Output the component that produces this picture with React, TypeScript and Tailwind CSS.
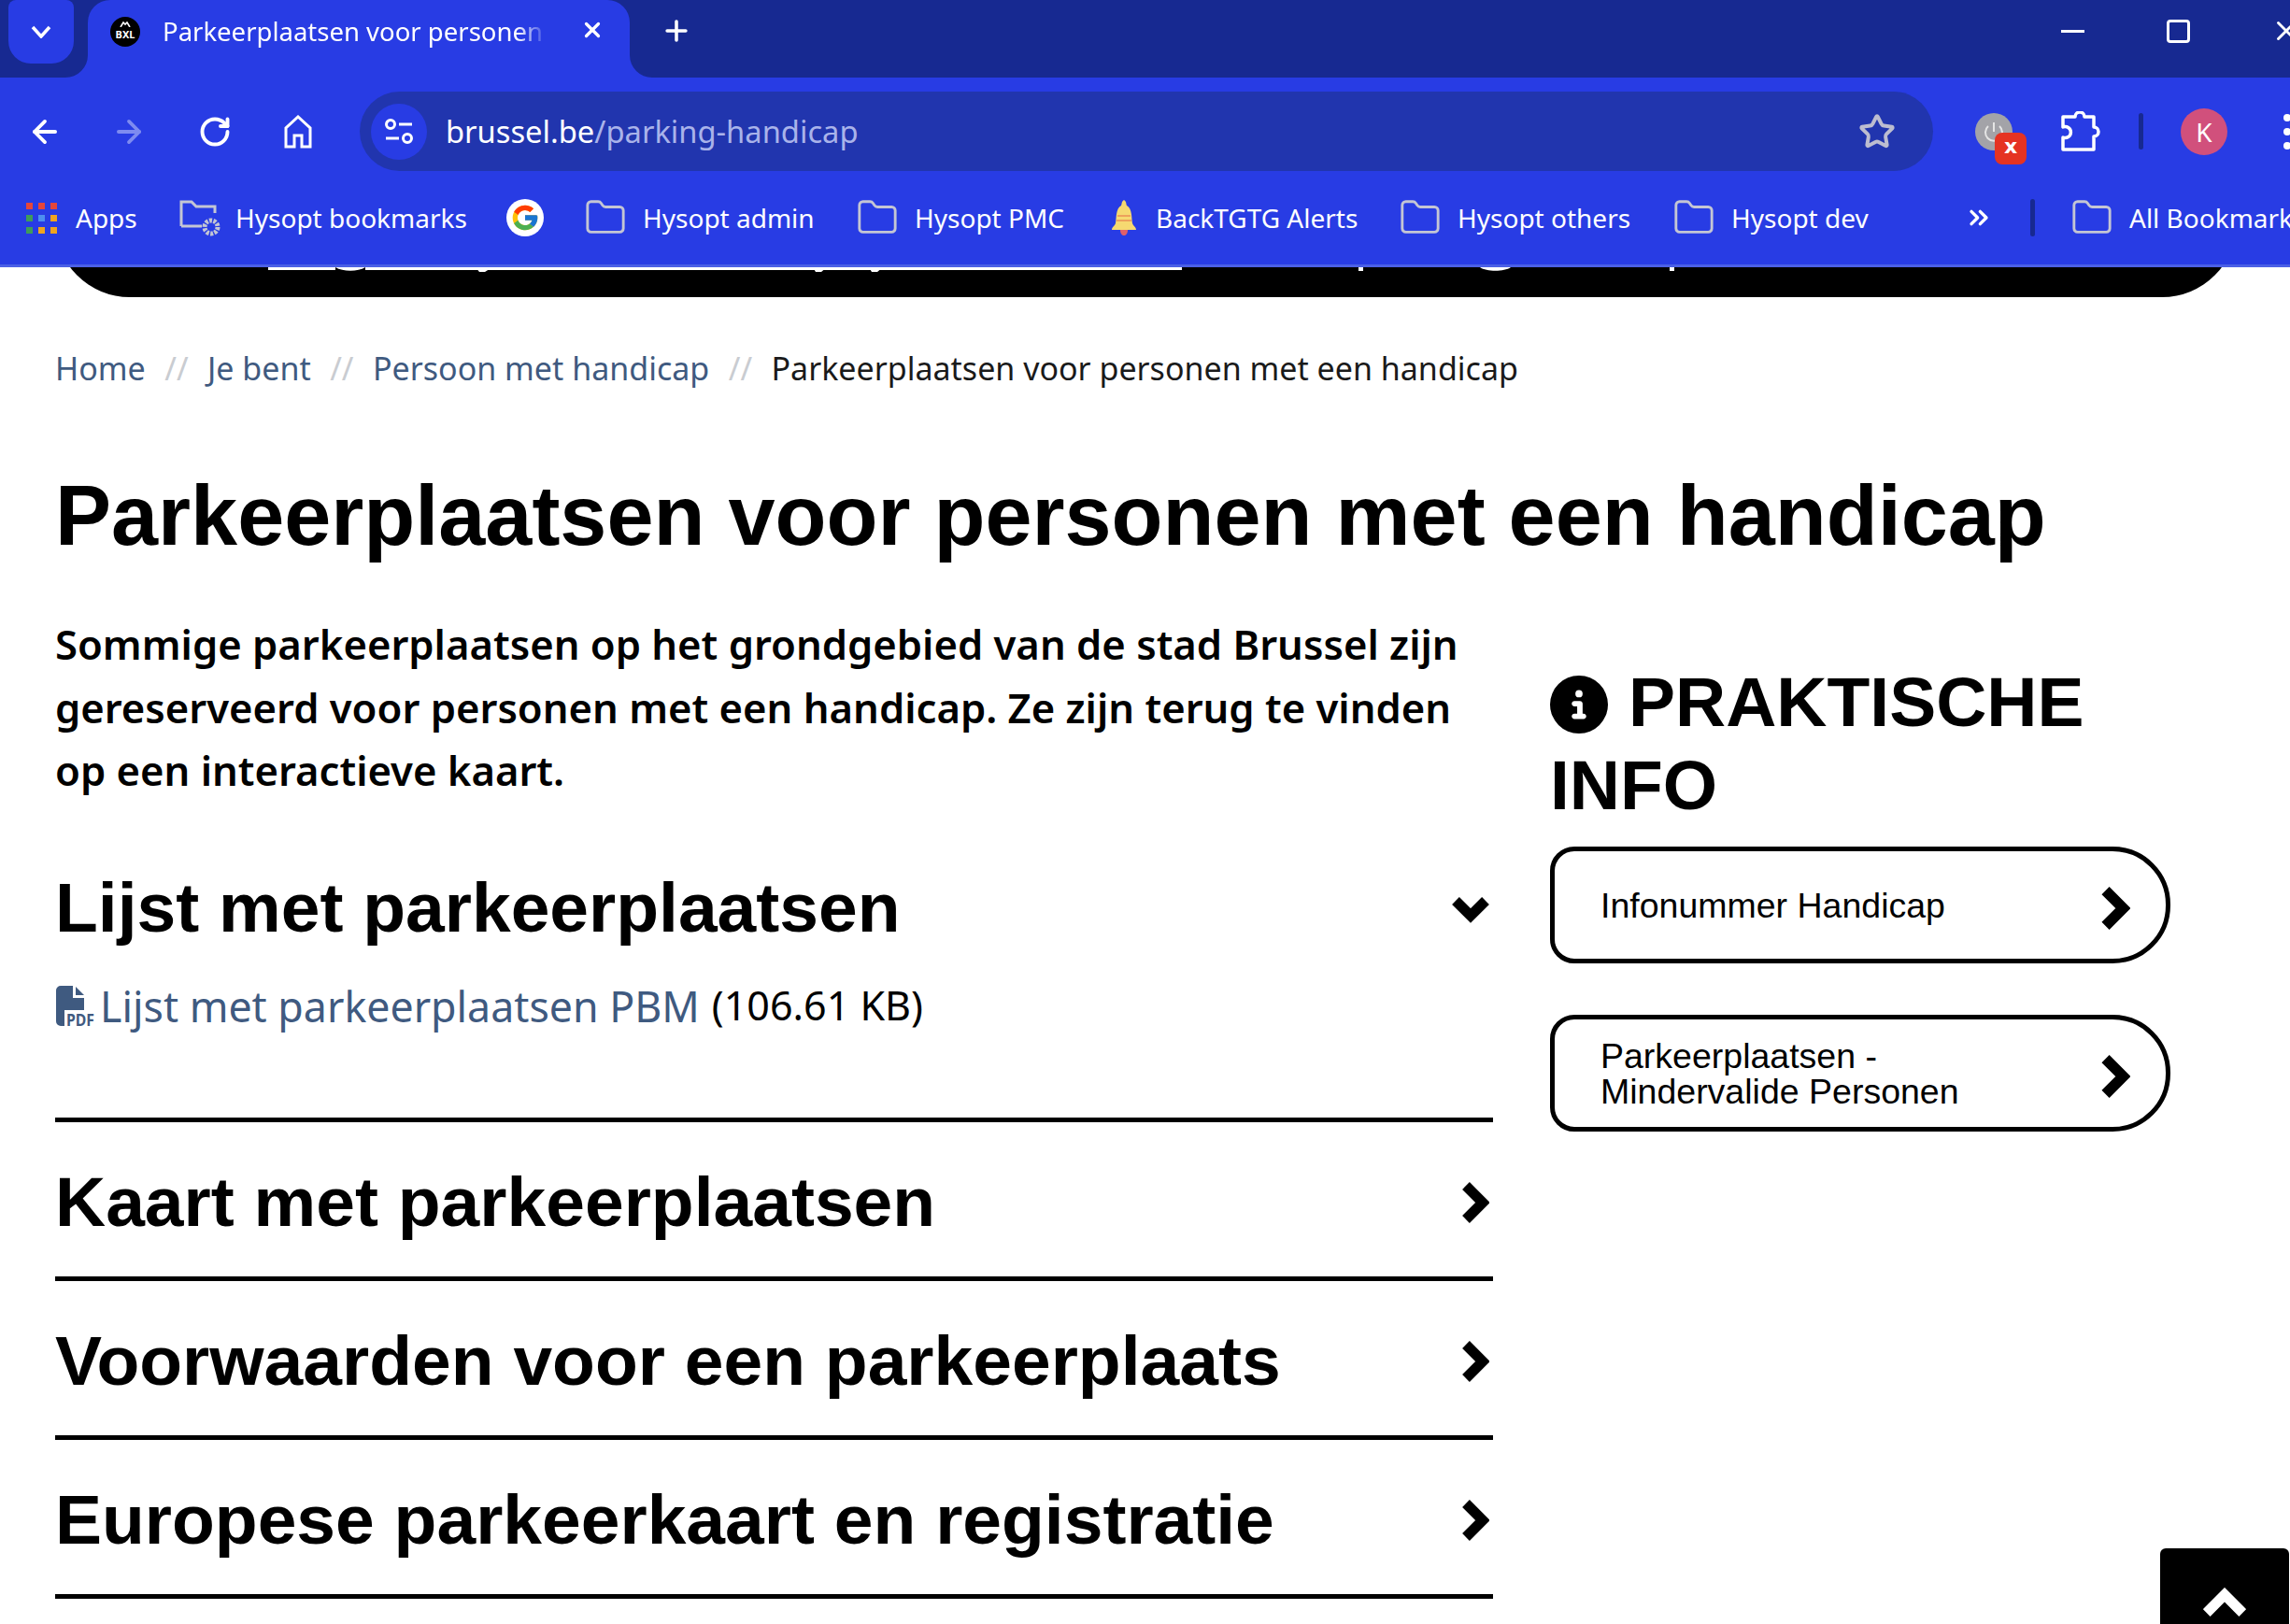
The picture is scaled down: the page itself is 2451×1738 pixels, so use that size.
import { ArrowLeft, ArrowRight, ChevronsRight, Folder, Plus, RotateCw, Star, X } from "lucide-react"
import { FaCircleInfo } from "react-icons/fa6"
import { FcGoogle } from "react-icons/fc"

const chrome = { fontFamily: '"Noto Sans", sans-serif' }
const body = { fontFamily: '"Noto Sans", sans-serif' }

function Flare({ flip }: { flip?: boolean }) {
  return (
    <svg width="24" height="24" viewBox="0 0 24 24" className={flip ? "absolute bottom-0 left-full" : "absolute bottom-0 right-full -scale-x-100"}>
      <path d="M0 0 V24 H24 A24 24 0 0 1 0 0 Z" fill="#283ce4" />
    </svg>
  )
}

function BookmarkFolder() {
  return <Folder size={46} strokeWidth={1.5} className="text-[#c4c6d4] shrink-0 -mx-[3px]" />
}

function Bookmark({ w, icon, label }: { w: string; icon: React.ReactNode; label: string }) {
  return (
    <div className={`flex items-center shrink-0 ${w}`}>
      {icon}
      <span className="ml-[20px] text-[28px] text-white whitespace-nowrap">{label}</span>
    </div>
  )
}

function AppsIcon() {
  const cols = ["bg-[#e5463a]", "bg-[#e5463a]", "bg-[#e5463a]", "bg-[#3f9c5a]", "bg-[#4d8ff0]", "bg-[#efa41f]", "bg-[#3f9c5a]", "bg-[#efa41f]", "bg-[#efa41f]"]
  return (
    <div className="grid grid-cols-[7px_7px_7px] gap-[6px] shrink-0">
      {cols.map((c, i) => (
        <div key={i} className={`h-[7px] ${c}`} />
      ))}
    </div>
  )
}

function Chev({ className, sw = 11 }: { className: string; sw?: number }) {
  return (
    <svg viewBox="0 0 30 44" className={className}>
      <path d="M5 4 L23 22 L5 40" fill="none" stroke="#000" strokeWidth={sw} />
    </svg>
  )
}

function AccordionRow({ title }: { title: string }) {
  return (
    <div className="h-[170px] border-b-[5px] border-black flex items-center justify-between pr-[4px] pt-[6px]">
      <h2 className="text-[75px] leading-[90px] font-bold">{title}</h2>
      <Chev className="w-[30px] h-[44px] mt-[2px]" />
    </div>
  )
}

function SideButton({ children }: { children: React.ReactNode }) {
  return (
    <div className="h-[125px] border-[5px] border-black rounded-l-[26px] rounded-r-[62px] flex items-center justify-between pl-[49px] pr-[38px] text-[37.5px] leading-[38px]">
      <div>{children}</div>
      <Chev className="w-[32px] h-[46px] mt-[6px]" />
    </div>
  )
}

export default function App() {
  return (
    <div className="relative h-[1738px] w-[2451px] overflow-hidden bg-white text-black" style={{ fontFamily: '"Liberation Sans", Arial, sans-serif' }}>
      {/* browser chrome */}
      <div className="relative z-10" style={chrome}>
        <div className="h-[83px] bg-[#172991] flex items-start">
          <div className="ml-[9px] w-[70px] h-[68px] bg-[#283ce4] rounded-b-[24px] rounded-t-[8px] flex items-center justify-center shrink-0">
            <svg width="22" height="14" viewBox="0 0 22 14"><path d="M2 2 L11 12 L20 2" fill="none" stroke="#fff" strokeWidth="3.5" /></svg>
          </div>
          <div className="relative ml-[15px] w-[580px] h-[83px] bg-[#283ce4] rounded-t-[24px] flex items-center pl-[24px] shrink-0 pb-[16px]">
            <Flare />
            <Flare flip />
            <div className="relative w-[32px] h-[32px] rounded-full bg-black text-white text-[11px] font-bold flex items-center justify-center pt-[7px] shrink-0">
              <svg width="12" height="6" viewBox="0 0 12 6" className="absolute top-[5px] left-[10px]"><path d="M1 6 L4 1 L6 3 L8 1 L11 6" fill="none" stroke="#fff" strokeWidth="1.6" /></svg>
              BXL
            </div>
            <span className="ml-[24px] w-[412px] overflow-hidden whitespace-nowrap text-[27.5px] text-white [mask-image:linear-gradient(to_right,black_92%,transparent)]">Parkeerplaatsen voor personen met een handicap</span>
            <X size={26} strokeWidth={3} className="text-white ml-[35px] shrink-0 -mt-[4px]" />
          </div>
          <Plus size={34} strokeWidth={2.5} className="text-white ml-[33px] mt-[16px] shrink-0" />
          <div className="ml-auto flex items-center shrink-0 h-[66px]">
            <div className="w-[25px] h-[3px] bg-white" />
            <div className="ml-[88px] w-[25px] h-[25px] border-[3px] border-white rounded-[4px]" />
            <X size={34} strokeWidth={2} className="text-white ml-[86px] -mr-[13px]" />
          </div>
        </div>
        <div className="h-[100px] pt-[15px] bg-[#283ce4] flex items-center">
          <ArrowLeft size={38} strokeWidth={2.4} className="text-white ml-[29px] shrink-0" />
          <ArrowRight size={38} strokeWidth={2.4} className="text-[#7e8bf0] ml-[52px] shrink-0" />
          <RotateCw size={36} strokeWidth={2.6} className="text-white ml-[55px] shrink-0" />
          <svg width="32" height="36" viewBox="0 0 32 36" className="ml-[55px] shrink-0">
            <path d="M3 34 V14 L16 2 L29 14 V34 H20 V22 H12 V34 Z" fill="none" stroke="#fff" strokeWidth="3" />
          </svg>
          <div className="ml-[50px] w-[1684px] h-[85px] rounded-full bg-[#2135ae] flex items-center pl-[12px] pr-[40px] shrink-0">
            <div className="w-[60px] h-[60px] rounded-full bg-[#283ce4] flex items-center justify-center shrink-0">
              <svg width="32" height="32" viewBox="0 0 32 32" fill="none" stroke="#fff" strokeWidth="3">
                <circle cx="7" cy="8" r="4.5" />
                <path d="M16 8 H30 M2 23 H16" />
                <circle cx="25" cy="23" r="4.5" />
              </svg>
            </div>
            <div className="ml-[20px] text-[32.7px] text-white whitespace-nowrap">
              brussel.be<span className="text-[#a9b3ea]">/parking-handicap</span>
            </div>
            <Star size={40} strokeWidth={2.4} className="ml-auto text-[#bcbdd0]" />
          </div>
          <div className="relative ml-[45px] w-[40px] h-[40px] rounded-full bg-[#a3a3a8] shrink-0 flex items-center justify-center">
            <svg width="24" height="24" viewBox="0 0 24 24" fill="none" stroke="#e5e5e5" strokeWidth="2"><path d="M12 2 V12 M6 6 A9 9 0 1 0 18 6" /></svg>
            <div className="absolute left-[21px] top-[21px] w-[34px] h-[34px] rounded-[8px] bg-[#e53322] text-white font-bold text-[22px] leading-[30px] text-center" style={{ fontFamily: '"DejaVu Sans", sans-serif' }}>x</div>
          </div>
          <svg width="44" height="44" viewBox="0 0 44 44" className="ml-[51px] shrink-0">
            <path d="M3 6 H16 A5 5 0 1 1 26 6 H36 V17 A5 5 0 1 1 36 27 V41 H3 V28 A6 6 0 1 0 3 17 Z" fill="none" stroke="#fff" strokeWidth="3.5" strokeLinejoin="round" />
          </svg>
          <div className="ml-[40px] w-[5px] h-[39px] rounded bg-[#172991] shrink-0" />
          <div className="ml-[40px] w-[50px] h-[50px] rounded-full bg-[#d1507c] text-white text-[28px] flex items-center justify-center shrink-0">K</div>
          <div className="ml-[60px] flex flex-col gap-[7px] shrink-0">
            <div className="w-[8px] h-[8px] rounded-full bg-white" />
            <div className="w-[8px] h-[8px] rounded-full bg-white" />
            <div className="w-[8px] h-[8px] rounded-full bg-white" />
          </div>
        </div>
        <div className="h-[103px] bg-[#283ce4] border-b-[3px] border-[#4b60e6] flex items-center pl-[28px] whitespace-nowrap overflow-hidden">
          <Bookmark w="w-[164px]" icon={<AppsIcon />} label="Apps" />
          <Bookmark
            w="w-[350px]"
            icon={
              <svg width="44" height="42" viewBox="0 0 44 42" fill="none" className="shrink-0 -mr-[4px]">
                <path d="M2 30 V4 H13 L18 9 H38 V16 M2 30 H24" stroke="#c4c6d4" strokeWidth="3" />
                <circle cx="34" cy="31" r="7" stroke="#c4c6d4" strokeWidth="5" strokeDasharray="3 1.4" />
              </svg>
            }
            label="Hysopt bookmarks"
          />
          <div className="w-[40px] h-[40px] rounded-full bg-white flex items-center justify-center shrink-0 mr-[46px]">
            <FcGoogle size={32} />
          </div>
          <Bookmark w="w-[291px]" icon={<BookmarkFolder />} label="Hysopt admin" />
          <Bookmark w="w-[270px]" icon={<BookmarkFolder />} label="Hysopt PMC" />
          <Bookmark
            w="w-[311px]"
            icon={
              <svg width="28" height="38" viewBox="0 0 28 38" className="shrink-0">
                <path d="M14 0 C11 2 12 4 11 6 C5 9 6 20 5 25 C4 28 1 29 1 32 H27 C27 29 24 28 23 25 C22 20 23 9 17 6 C16 4 17 2 14 0 Z" fill="#f6d971" />
                <path d="M7 17 H21 M6 22 H22" stroke="#eda15c" strokeWidth="2" />
                <path d="M10 32 H18 C18 36 16 38 14 38 C12 38 10 36 10 32 Z" fill="#e0606a" />
              </svg>
            }
            label="BackTGTG Alerts"
          />
          <Bookmark w="w-[293px]" icon={<BookmarkFolder />} label="Hysopt others" />
          <Bookmark w="w-[309px]" icon={<BookmarkFolder />} label="Hysopt dev" />
          <ChevronsRight size={32} strokeWidth={2.5} className="text-white shrink-0" />
          <div className="ml-[39px] w-[5px] h-[40px] rounded bg-[#172991] shrink-0" />
          <div className="ml-[41px] shrink-0">
            <Bookmark w="w-[260px]" icon={<BookmarkFolder />} label="All Bookmarks" />
          </div>
        </div>
      </div>

      {/* black header, almost hidden under the browser bar */}
      <div className="relative -mt-[80px] ml-[59px] w-[2335px] h-[112px] bg-black rounded-b-[80px]">
        <svg width="2335" height="6" viewBox="0 0 2335 6" className="absolute left-0 top-[80px]">
          <path d="M228 0 H300 V3 H228 Z M332 0 H1206 V3 H332 Z" fill="#fff" />
          <path d="M300 0 C308 5 324 5 332 0 Z M450 0 L468 0 L460 5 L454 5 Z M811 0 H826 L820 5 H814 Z M871 0 H886 L880 5 H874 Z" fill="#fff" />
          <path d="M1395 0 H1400 V4 H1395 Z M1525 0 C1532 5 1551 5 1558 0 Z M1728 0 H1733 V4 H1728 Z" fill="#fff" />
        </svg>
      </div>

      <div className="px-[59px]">
        <div className="mt-[50px] flex items-center text-[34px] leading-[52px] text-[#3f5a80] whitespace-nowrap" style={body}>
          <span>Home</span>
          <span className="mx-[20.5px] text-[#c9ccd1]">//</span>
          <span>Je bent</span>
          <span className="mx-[20.5px] text-[#c9ccd1]">//</span>
          <span>Persoon met handicap</span>
          <span className="mx-[20.5px] text-[#c9ccd1]">//</span>
          <span className="text-[#1a1a1a]">Parkeerplaatsen voor personen met een handicap</span>
        </div>
        <h1 className="mt-[77px] text-[90px] leading-[110px] font-bold whitespace-nowrap">Parkeerplaatsen voor personen met een handicap</h1>

        <div className="flex items-start">
          <div className="w-[1539px] shrink-0 pt-[49px]">
            <p className="text-[43.6px] leading-[67.5px] font-semibold pr-[20px]" style={body}>
              Sommige parkeerplaatsen op het grondgebied van de stad Brussel zijn gereserveerd voor personen met een handicap. Ze zijn terug te vinden op een interactieve kaart.
            </p>
            <div className="mt-[67px] flex items-center justify-between pr-[3px]">
              <h2 className="text-[75px] leading-[90px] font-bold">Lijst met parkeerplaatsen</h2>
              <svg width="42" height="30" viewBox="0 0 42 30" className="mt-[5px]"><path d="M5 6 L21 22 L37 6" fill="none" stroke="#000" strokeWidth="11" /></svg>
            </div>
            <div className="mt-[31px] flex items-center h-[60px] text-[44.7px] whitespace-nowrap" style={body}>
              <svg width="42" height="44" viewBox="0 0 42 44" className="shrink-0 mr-[6px]">
                <path d="M6 0 H19 V13 H31 V26 H10 V43 H6 A5 5 0 0 1 1 38 V5 A5 5 0 0 1 6 0 Z" fill="#3f5a80" />
                <path d="M22 1 L31 10 H22 Z" fill="#3f5a80" />
                <text x="12" y="43" fontSize="17" fontWeight="700" fill="#3f5a80" textLength="30" lengthAdjust="spacingAndGlyphs">PDF</text>
              </svg>
              <span className="text-[#3f5a80]">Lijst met parkeerplaatsen PBM</span>
              <span className="ml-[13px] text-[43px]">(106.61 KB)</span>
            </div>
            <div className="mt-[89px] border-b-[5px] border-black" />
            <AccordionRow title="Kaart met parkeerplaatsen" />
            <AccordionRow title="Voorwaarden voor een parkeerplaats" />
            <AccordionRow title="Europese parkeerkaart en registratie" />
          </div>

          <div className="w-[664px] ml-[61px] shrink-0 pt-[100px]">
            <h2 className="text-[75px] leading-[89px] font-bold">
              <FaCircleInfo className="inline-block w-[62px] h-[62px] mr-[22px] align-[-8px]" />
              PRAKTISCHE INFO
            </h2>
            <div className="mt-[21px]">
              <SideButton>Infonummer Handicap</SideButton>
            </div>
            <div className="mt-[55px]">
              <SideButton>
                Parkeerplaatsen -<br />
                Mindervalide Personen
              </SideButton>
            </div>
          </div>
        </div>
      </div>

      {/* scroll to top */}
      <div className="absolute left-[2312px] top-[1657px] w-[138px] h-[120px] bg-black rounded-[6px] flex justify-center pt-[42px]">
        <svg width="46" height="32" viewBox="0 0 50 32"><path d="M4 28 L25 7 L46 28" fill="none" stroke="#fff" strokeWidth="12" /></svg>
      </div>
    </div>
  )
}
